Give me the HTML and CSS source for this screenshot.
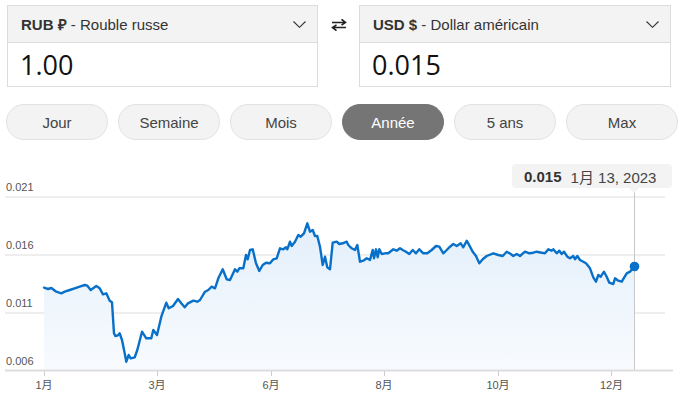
FILE: index.html
```html
<!DOCTYPE html>
<html lang="fr">
<head>
<meta charset="utf-8">
<link rel="stylesheet" href="styles.css">
</head>
<body>
<div class="page">
  <div class="converter">
    <div class="cbox">
      <div class="chead">
        <span class="ctitle"><b>RUB ₽</b> - Rouble russe</span>
        <svg class="chev" width="13" height="7" viewBox="0 0 13 7"><path d="M0.5 0.5 L6.5 6.3 L12.5 0.5" fill="none" stroke="#333" stroke-width="1.1"/></svg>
      </div>
      <div class="cval">1.00</div>
    </div>
    <div class="swap">
      <svg width="16" height="12" viewBox="0 0 16 12"><path d="M1 3.5 H14.5 M10.5 0.3 L14.5 3.5 L10.5 6.2 M15 8.5 H1.5 M5.5 5.8 L1.5 8.5 L5.5 11.7" fill="none" stroke="#222" stroke-width="1.6"/></svg>
    </div>
    <div class="cbox cbox-r">
      <div class="chead">
        <span class="ctitle"><b>USD $</b> - Dollar américain</span>
        <svg class="chev" width="13" height="7" viewBox="0 0 13 7"><path d="M0.5 0.5 L6.5 6.3 L12.5 0.5" fill="none" stroke="#333" stroke-width="1.1"/></svg>
      </div>
      <div class="cval">0.015</div>
    </div>
  </div>

  <div class="ranges">
    <div class="rbtn">Jour</div>
    <div class="rbtn">Semaine</div>
    <div class="rbtn">Mois</div>
    <div class="rbtn active">Année</div>
    <div class="rbtn">5 ans</div>
    <div class="rbtn rbtn-last">Max</div>
  </div>

  <div class="chart">
    <svg class="plot" width="696" height="255" viewBox="0 150 696 255">
      <defs>
        <linearGradient id="fillg" x1="0" y1="0" x2="0" y2="1">
          <stop offset="0" stop-color="#e3effb"/>
          <stop offset="1" stop-color="#f8fbfe"/>
        </linearGradient>
      </defs>
      <g class="grid">
        <line x1="5" y1="197" x2="665" y2="197"/>
        <line x1="5" y1="255" x2="665" y2="255"/>
        <line x1="5" y1="313" x2="665" y2="313"/>
      </g>
      <g class="ylab">
        <text x="6" y="191">0.021</text>
        <text x="6" y="249">0.016</text>
        <text x="6" y="307">0.011</text>
        <text x="6" y="365">0.006</text>
      </g>
      <path class="area" d="M44,287.7 L48,289 51.3,288 56.3,291.7 61.3,293.3 64.7,291.7 69.7,290 74.7,288.3 79.7,286.7 84.7,285 87.3,285.7 90.7,290 96.3,286 99.7,288.3 103,294.3 106.3,293.3 109.7,300.7 112,302.3 114,333.3 115.3,336 118,335.3 119.7,333.3 122,340 124.7,353.3 126.3,361.7 128.7,355 130.7,358.3 134.7,357.3 137.3,350 142,331.7 146.3,338.3 151.3,338.3 153.3,330 157,335 161.3,316.7 166.3,302.7 168.7,308.3 173,306 178,299 181.3,303.3 184.7,307.3 188,303.3 193.3,300.7 197.3,301.7 200,300 205,291.7 208.3,290 211.7,286.7 215,288.3 218.3,278.3 222.7,269.3 226.7,279.3 230,280 235,269.3 237.3,271.7 239.3,268.3 243.3,268.3 246,255 247.7,259.3 250,250 252.7,249.3 256,263.3 259.3,271 262.7,265 266,262.7 270,263.3 273.3,259.3 276.7,258.3 280,248.3 283.3,249.3 286,247.3 287.3,249.3 290,241.7 291.7,246 295,241.7 298.3,235 300.7,236.7 304,233.3 307.3,223.3 310,231.7 312.7,230 315,236 317.3,236 320,246.7 322.7,265 325,256.7 327.3,267.3 330,269.3 332.7,242.7 336.7,241.7 339.3,244 342.7,243.3 346.7,241.7 348.3,245 351.7,248.3 355,250 357.3,245 360,261.7 363.3,260.7 366.7,258.3 370,260 372.7,250 374,258.3 376,249.3 377.7,257.3 379.3,249.3 381.7,254 385,253.3 388.3,253.3 393.3,249.3 396.7,250.7 400,248.3 402.7,250 406,251.7 409.3,254 412.7,250 416,253.3 419.3,249.3 423.3,253.3 427.3,253.3 431.7,250 436,246 439.3,246.7 443.3,253.3 446.7,250 450,246.7 453.3,244 456.7,246 460.7,243.3 463.3,247.3 466.7,240.7 470,246.7 472.7,251.7 476,256 479.3,263.3 482.7,259.3 486.7,256 493.3,253.3 498.3,255 502.7,256 506.7,251.7 510.7,254 513.3,256 516.7,254 520,256 525,251.7 529.3,253.3 533.3,252.7 536.7,251.7 541.7,252.7 545,253.3 548.3,249.3 551.7,250.7 553.3,249.3 556.7,253.3 559.3,250.7 561.7,254 564,251.7 567.3,256.7 570,258.3 573.3,256 575,259.3 577.3,256 580,260 583.3,261.7 586,263.3 590,268.3 593.3,277.3 596,281.7 598.3,275 600.7,276.7 604,271.7 606.7,276.7 609.3,282.7 613.3,284 615,278.3 618.3,280.7 621.7,281.7 626.7,273.3 630,271.7 634,266.7 L634,370 L44,370 Z"/>
      <line class="cursor" x1="634.5" y1="189" x2="634.5" y2="370"/>
      <line class="axis" x1="5" y1="370.5" x2="673" y2="370.5"/>
      <g class="ticks">
        <line x1="44.5" y1="371" x2="44.5" y2="376"/>
        <line x1="157.5" y1="371" x2="157.5" y2="376"/>
        <line x1="271.5" y1="371" x2="271.5" y2="376"/>
        <line x1="384.5" y1="371" x2="384.5" y2="376"/>
        <line x1="498.5" y1="371" x2="498.5" y2="376"/>
        <line x1="611.5" y1="371" x2="611.5" y2="376"/>
      </g>
      <polyline class="line" points="44,287.7 48,289 51.3,288 56.3,291.7 61.3,293.3 64.7,291.7 69.7,290 74.7,288.3 79.7,286.7 84.7,285 87.3,285.7 90.7,290 96.3,286 99.7,288.3 103,294.3 106.3,293.3 109.7,300.7 112,302.3 114,333.3 115.3,336 118,335.3 119.7,333.3 122,340 124.7,353.3 126.3,361.7 128.7,355 130.7,358.3 134.7,357.3 137.3,350 142,331.7 146.3,338.3 151.3,338.3 153.3,330 157,335 161.3,316.7 166.3,302.7 168.7,308.3 173,306 178,299 181.3,303.3 184.7,307.3 188,303.3 193.3,300.7 197.3,301.7 200,300 205,291.7 208.3,290 211.7,286.7 215,288.3 218.3,278.3 222.7,269.3 226.7,279.3 230,280 235,269.3 237.3,271.7 239.3,268.3 243.3,268.3 246,255 247.7,259.3 250,250 252.7,249.3 256,263.3 259.3,271 262.7,265 266,262.7 270,263.3 273.3,259.3 276.7,258.3 280,248.3 283.3,249.3 286,247.3 287.3,249.3 290,241.7 291.7,246 295,241.7 298.3,235 300.7,236.7 304,233.3 307.3,223.3 310,231.7 312.7,230 315,236 317.3,236 320,246.7 322.7,265 325,256.7 327.3,267.3 330,269.3 332.7,242.7 336.7,241.7 339.3,244 342.7,243.3 346.7,241.7 348.3,245 351.7,248.3 355,250 357.3,245 360,261.7 363.3,260.7 366.7,258.3 370,260 372.7,250 374,258.3 376,249.3 377.7,257.3 379.3,249.3 381.7,254 385,253.3 388.3,253.3 393.3,249.3 396.7,250.7 400,248.3 402.7,250 406,251.7 409.3,254 412.7,250 416,253.3 419.3,249.3 423.3,253.3 427.3,253.3 431.7,250 436,246 439.3,246.7 443.3,253.3 446.7,250 450,246.7 453.3,244 456.7,246 460.7,243.3 463.3,247.3 466.7,240.7 470,246.7 472.7,251.7 476,256 479.3,263.3 482.7,259.3 486.7,256 493.3,253.3 498.3,255 502.7,256 506.7,251.7 510.7,254 513.3,256 516.7,254 520,256 525,251.7 529.3,253.3 533.3,252.7 536.7,251.7 541.7,252.7 545,253.3 548.3,249.3 551.7,250.7 553.3,249.3 556.7,253.3 559.3,250.7 561.7,254 564,251.7 567.3,256.7 570,258.3 573.3,256 575,259.3 577.3,256 580,260 583.3,261.7 586,263.3 590,268.3 593.3,277.3 596,281.7 598.3,275 600.7,276.7 604,271.7 606.7,276.7 609.3,282.7 613.3,284 615,278.3 618.3,280.7 621.7,281.7 626.7,273.3 630,271.7 634,266.7"/>
      <circle class="dot" cx="634.5" cy="266.5" r="4.8"/>
      <g class="xlab">
        <text x="44" y="389">1月</text>
        <text x="157" y="389">3月</text>
        <text x="271" y="389">6月</text>
        <text x="384" y="389">8月</text>
        <text x="498" y="389">10月</text>
        <text x="611.5" y="389">12月</text>
      </g>
    </svg>
    <div class="tip"><b>0.015</b><span class="tipdate">1月 13, 2023</span></div>
  </div>
</div>
</body>
</html>
```

FILE: styles.css
```css
html, body {
  margin: 0;
  padding: 0;
  background: #ffffff;
}
body {
  font-family: "Liberation Sans", Arial, "Noto Sans CJK SC", sans-serif;
  color: #333;
}
.page {
  width: 696px;
  height: 405px;
  overflow: hidden;
}
.converter {
  display: flex;
  padding: 5px 0 0 7px;
}
.cbox {
  width: 311px;
  border: 1px solid #dcdcdc;
  box-sizing: border-box;
  background: #fff;
}
.cbox-r {
  width: 312px;
}
.chead {
  height: 36px;
  background: #f3f3f3;
  border-bottom: 1px solid #dcdcdc;
  display: flex;
  align-items: center;
  justify-content: space-between;
  padding: 0 11px 0 13px;
}
.ctitle {
  font-size: 15px;
  color: #333;
  white-space: nowrap;
}
.ctitle b {
  font-weight: bold;
  color: #333;
}
.chev {
  display: block;
}
.cval {
  height: 43px;
  display: flex;
  align-items: center;
  padding-left: 12px;
  font-family: "Open Sans", "Noto Sans", sans-serif;
  font-size: 27px;
  color: #111;
}
.swap {
  width: 41px;
  display: flex;
  justify-content: center;
  padding-top: 14px;
  box-sizing: border-box;
}
.swap svg {
  display: block;
}
.ranges {
  display: flex;
  gap: 10px;
  padding-left: 6px;
  margin-top: 17px;
}
.rbtn {
  width: 102px;
  height: 36px;
  box-sizing: border-box;
  border: 1px solid #e2e2e2;
  background: #f3f3f3;
  border-radius: 18px;
  display: flex;
  align-items: center;
  justify-content: center;
  font-size: 15px;
  color: #444;
}
.rbtn-last {
  width: 112px;
}
.rbtn.active {
  background: #757575;
  border-color: #757575;
  color: #fff;
}
.chart {
  position: relative;
  margin-top: 10px;
  height: 255px;
}
.plot {
  display: block;
}
.grid line {
  stroke: #e8e8e8;
  stroke-width: 1.5;
}
.axis {
  stroke: #dddddd;
  stroke-width: 2;
}
.ticks line {
  stroke: #cfcfcf;
  stroke-width: 1;
}
.cursor {
  stroke: #c8c8c8;
  stroke-width: 1;
}
.area {
  fill: url(#fillg);
  stroke: none;
}
.line {
  fill: none;
  stroke: #0870c8;
  stroke-width: 2.4;
  stroke-linejoin: round;
  stroke-linecap: round;
}
.dot {
  fill: #0870c8;
}
.ylab text {
  font-family: "Liberation Sans", Arial, sans-serif;
  font-size: 11px;
  fill: #555;
}
.xlab text {
  font-family: "Liberation Sans", Arial, "Noto Sans CJK SC", sans-serif;
  font-size: 11px;
  fill: #555;
  text-anchor: middle;
}
.tip {
  position: absolute;
  left: 512px;
  top: 14px;
  width: 160px;
  height: 24px;
  box-sizing: border-box;
  background: #f3f3f3;
  border-radius: 4px;
  display: flex;
  align-items: center;
  padding-left: 12px;
  font-size: 15px;
  color: #444;
  white-space: nowrap;
  font-family: "Liberation Sans", Arial, "Noto Sans CJK SC", sans-serif;
}
.tip::after {
  content: "";
  position: absolute;
  left: 117px;
  bottom: -5px;
  width: 0;
  height: 0;
  border-left: 5px solid transparent;
  border-right: 5px solid transparent;
  border-top: 5px solid #f3f3f3;
}
.tip b {
  color: #333;
  font-weight: bold;
  margin-right: 9px;
}
.tipdate {
  color: #444;
}
```
